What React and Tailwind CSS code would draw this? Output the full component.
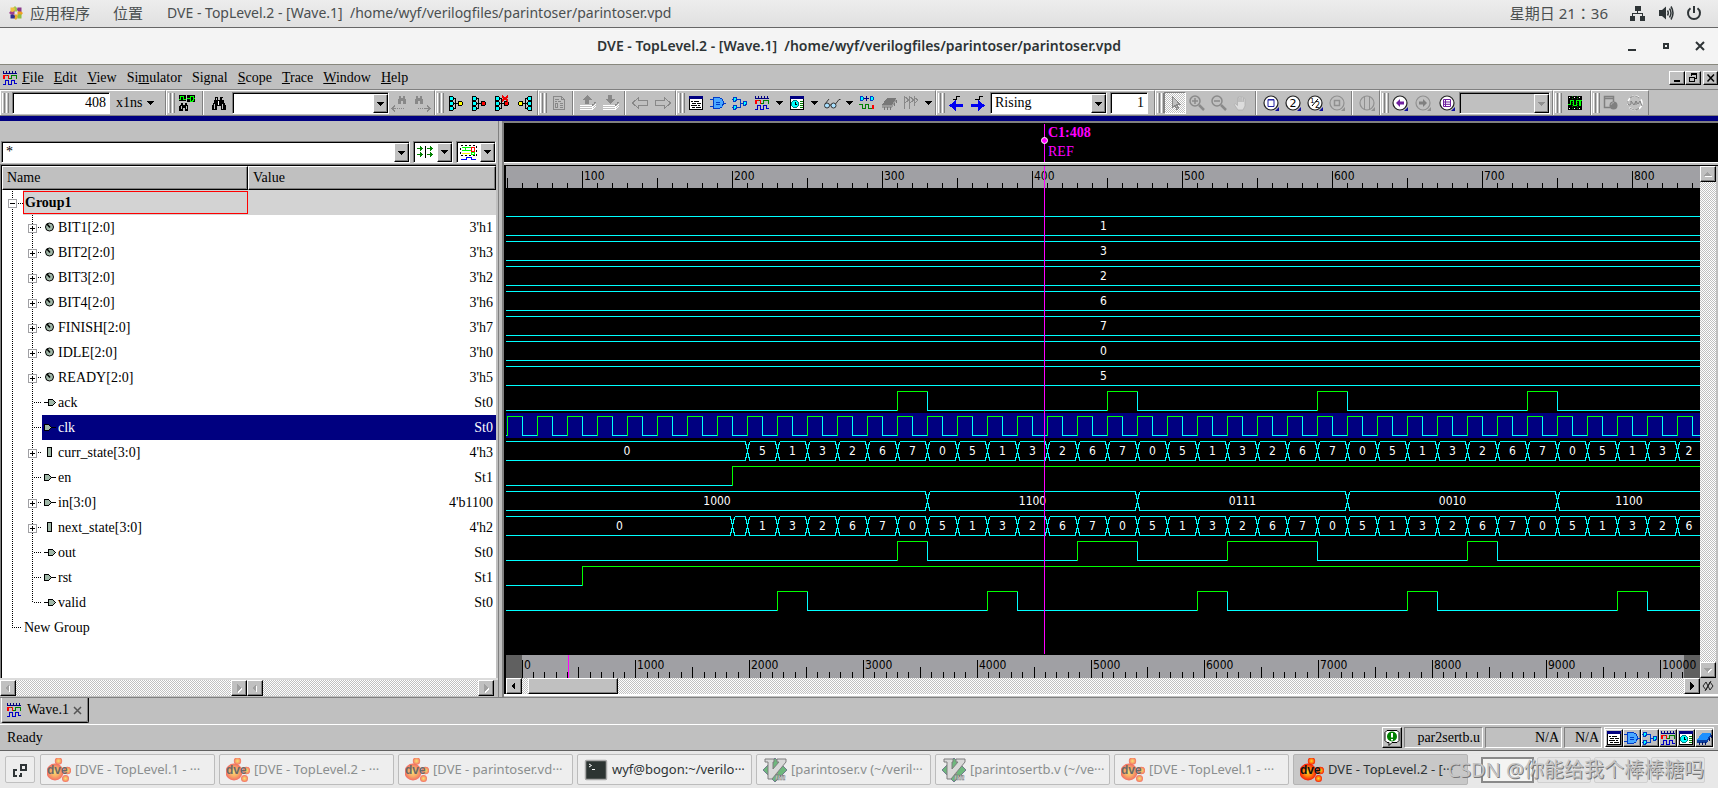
import React, { useState } from "react";
import clsx from "clsx";

const SERIF = "font-['Liberation_Serif',serif] text-sm";
const SANS = "font-['Noto_Sans','Noto_Sans_CJK_SC',sans-serif]";
const DIGITS = "font-['DejaVu_Sans_Condensed','DejaVu_Sans',sans-serif] text-xs";

const RAISED = "border border-t-white border-l-white border-r-black border-b-black bg-[#c0c0c0] shadow-[inset_-1px_-1px_0_#808080]";
const SUNKEN = "border border-t-[#808080] border-l-[#808080] border-r-white border-b-white shadow-[inset_1px_1px_0_#000]";
const DITHER = "bg-[repeating-conic-gradient(#fff_0_25%,#c0c0c0_0_50%)] bg-[length:2px_2px]";

// signals

const CYCLE = ["5", "1", "3", "2", "6", "7", "0"];

const stateChanges = (shift) => {
  const list = [];
  for (let i = 0; i < 32; i++) {
    list.push([210 + i * 20, CYCLE[(i + shift) % 7]]);
  }
  return list;
};

const pulses = (list) => [[0, 0], ...list.flatMap(([from, to]) => [[from, 1], [to, 0]])];

const clkEdges = () => {
  const list = [];
  for (let t = 50; t < 850; t += 20) list.push([t, t + 10]);
  return pulses(list);
};

const signals = [
  { name: "BIT1[2:0]", value: "3'h1", icon: "param", bus: [[0, "1"]] },
  { name: "BIT2[2:0]", value: "3'h3", icon: "param", bus: [[0, "3"]] },
  { name: "BIT3[2:0]", value: "3'h2", icon: "param", bus: [[0, "2"]] },
  { name: "BIT4[2:0]", value: "3'h6", icon: "param", bus: [[0, "6"]] },
  { name: "FINISH[2:0]", value: "3'h7", icon: "param", bus: [[0, "7"]] },
  { name: "IDLE[2:0]", value: "3'h0", icon: "param", bus: [[0, "0"]] },
  { name: "READY[2:0]", value: "3'h5", icon: "param", bus: [[0, "5"]] },
  { name: "ack", value: "St0", icon: "out", bits: pulses([[310, 330], [450, 470], [590, 610], [730, 750]]) },
  { name: "clk", value: "St0", icon: "in", bits: clkEdges() },
  { name: "curr_state[3:0]", value: "4'h3", icon: "reg", bus: [[0, "0"], ...stateChanges(0)] },
  { name: "en", value: "St1", icon: "in", bits: [[0, 0], [200, 1]] },
  { name: "in[3:0]", value: "4'b1100", icon: "in", bus: [[0, "1000"], [330, "1100"], [470, "0111"], [610, "0010"], [750, "1100"]] },
  { name: "next_state[3:0]", value: "4'h2", icon: "reg", bus: [[0, "0"], [200, ""], ...stateChanges(1)] },
  { name: "out", value: "St0", icon: "out", bits: pulses([[310, 330], [430, 470], [530, 590], [690, 710]]) },
  { name: "rst", value: "St1", icon: "in", bits: [[0, 0], [100, 1]] },
  { name: "valid", value: "St0", icon: "out", bits: pulses([[230, 250], [370, 390], [510, 530], [650, 670], [790, 810]]) },
];

// icons

function Svg({ w = 16, h = 16, children, crisp = true, className }) {
  return (
    <svg width={w} height={h} viewBox={`0 0 ${w} ${h}`} fill="none" aria-hidden="true"
      shapeRendering={crisp ? "crispEdges" : "auto"} className={clsx("shrink-0", className)}>
      {children}
    </svg>
  );
}

const Down = ({ color = "#000" }) => (
  <Svg w={7} h={4}><path d="M0 0H7V1H6V2H5V3H4V4H3V3H2V2H1V1H0Z" fill={color} /></Svg>
);

const Binoculars = ({ color = "#000" }) => (
  <Svg>
    <path d="M4 2h3v3h2V2h3v3h1v3h1v2h1v5h-5v-4H6v4H1v-5h1V8h1V5h1z" fill={color} />
    <path d="M5 3v2M11 3v2M3.500 9v5M11.500 9v5" stroke="#c0c0c0" />
    <path d="M7.500 6v4" stroke="#fff" />
  </Svg>
);

const FindSignal = () => (
  <Svg w={18} h={18}>
    <path d="M1 1h7v6H1zM9 1h8v7H9z" fill="#000" />
    <path d="M1 5.500h1.500v-3h3v3H8M9 4.500h3M12.500 2v5h2l1-1v-3l-1-1h-2M15 4.500h2" stroke="#0f0" />
    <path d="M3 9h2v2h2V9h2v2h1v6H7v-3H5v3H1v-5l2-2z" fill="#000" />
    <path d="M3.500 12v3M8.500 12v3" stroke="#c0c0c0" />
  </Svg>
);

const FindArrow = ({ back }) => (
  <Svg w={18} h={18}>
    <path d={back ? "M8 2h2v2h2V2h2v2l1 2v4h-3V7h-2v3H7V6l1-2z" : "M3 2h2v2h2V2h2v2l1 2v4H7V7H5v3H2V6l1-2z"} fill="#888" />
    {back
      ? <path d="M1 14.500h4M4 11.500l-3 3 3 3M6 14.500h1M8 14.500h1M10 14.500h1M12 14.500h1" stroke="#888" />
      : <path d="M12 14.500h5M14 11.500l3 3-3 3M5 14.500h1M7 14.500h1M9 14.500h1M11 14.500h1" stroke="#888" />}
  </Svg>
);

const Drivers = ({ color, x, flip }) => (
  <Svg>
    <g transform={flip ? "matrix(-1 0 0 1 16 0)" : undefined}>
      <path d="M1.500 1.500h3l1 1v2l-1 1h-3zM1.500 6.500h3l1 1v2l-1 1h-3zM1.500 11.500h3l1 1v2l-1 1h-3z" fill="#0ff" stroke="#000" />
      <path d="M6 3.500h1.500v10H6M6 8.500h4" stroke="#000" />
      <path d="M10.500 6.500h3l1 1v2l-1 1h-3z" fill={color} stroke="#000" />
    </g>
    {x && <path d="M8 1l6 5M14 1L8 6" stroke="#e00" strokeWidth="2" />}
  </Svg>
);

const Doc = () => (
  <Svg>
    <path d="M2.500 1.500h8l3 3v10h-11z" stroke="#888" />
    <path d="M10.500 1.500v3h3M4 4.500h4M4 6.500h2M7 6.500h3M9 8.500h3M9 10.500h3M9 12.500h3M4.500 8.500v4M6.500 8.500v4M4 8.500h3M4 12.500h3" stroke="#888" />
  </Svg>
);

const Stack = ({ down }) => (
  <Svg w={18}>
    <path d={down ? "M6 0h4v4h3L8 9 3 4h3z" : "M8 0l5 5h-3v4H6V5H3z"} fill="#888" />
    <path d="M1 10.500h12l4-3M1 12.500h12l4-3M1 14.500h12l4-3" stroke="#fff" />
    <path d="M13 10.500l4-4" stroke="#888" strokeDasharray="2 1" />
  </Svg>
);

const HollowArrow = ({ right }) => (
  <Svg>
    <path d={right ? "M.5 5.500h9v-3l6 5.500-6 5.500v-3h-9z" : "M15.500 5.500h-9v-3L.5 8l6 5.500v-3h9z"} stroke="#888" />
  </Svg>
);

const SourceIcon = () => (
  <Svg>
    <path d="M1.500 1.500h13v13h-13z" fill="#fff" stroke="#000" />
    <path d="M1 1h14v3H1z" fill="#000080" />
    <path d="M3 6.500h2M6 6.500h5M4 8.500h4M9 8.500h4M3 10.500h6M10 10.500h2M4 12.500h3M8 12.500h5" stroke="#000" />
  </Svg>
);

const GateIcon = () => (
  <Svg>
    <path d="M3.500 2.500h6l3 2 1 3-1 4-3 2h-6z" fill="#4aa8ff" stroke="#003cc8" />
    <path d="M0 4.500h3M0 11.500h3M14 8.500h2M6 7.500h4M6 9.500h4" stroke="#003cc8" />
  </Svg>
);

const PathIcon = () => (
  <Svg>
    <path d="M1.500 2v4h2l1-1V3L3.500 2zM1.500 10v4h2l1-1v-2l-1-1zM11.500 6v4h2l1-1V7l-1-1z" fill="#0ff" stroke="#003cc8" />
    <path d="M5 4.500h3.500v8H5M9 8.500h2M0 4.500h1M0 12.500h1" stroke="#003cc8" />
  </Svg>
);

const WaveIcon = () => (
  <Svg>
    <path d="M1 3h14M1.500 1v2M4.500 1v2M7.500 1v2M10.500 1v2M13.500 1v2" stroke="#000080" />
    <path d="M2 5v4" stroke="#f00" strokeWidth="2" />
    <path d="M3 5.500h3.500v3H9v-3h5.500v3" stroke="#008000" />
    <path d="M6.500 5v4M1 5.500h4" stroke="#f00" />
    <path d="M1 14.500h2.500v-4h3v4h3v-4h3v3H15" stroke="#0000c8" />
  </Svg>
);

const ListIcon = () => (
  <Svg>
    <path d="M1.500 1.500h13v13h-13z" fill="#fff" stroke="#000" />
    <path d="M1 1h14v3H1z" fill="#000080" />
    <circle cx="6" cy="9" r="3.500" fill="#0ff" stroke="#008080" />
    <path d="M6.500 7v2.500H8" stroke="#000" />
    <path d="M11 6.500h3M11 8.500h3M11 10.500h3M11 12.500h3" stroke="#008000" />
  </Svg>
);

const Glasses = () => (
  <Svg w={18} crisp={false}>
    <circle cx="4" cy="10.500" r="2.500" fill="#a8e0ff" stroke="#333" />
    <circle cx="10.500" cy="10.500" r="2.500" fill="#a8e0ff" stroke="#333" />
    <path d="M6.500 10h1.500M2 9l4-5M12.500 9L16 4.500h1.500" stroke="#333" />
  </Svg>
);

const IoIcon = () => (
  <Svg>
    <path d="M1.500 1.500h2l1 1v2l-1 1h-2zM11.500 1.500h2l1 1v2l-1 1h-2z" fill="#0ff" stroke="#003cc8" />
    <path d="M5 3.500h5M7.500 1v5" stroke="#000080" />
    <path d="M0 9.500h3.500v4h3v-4h3v4h3" stroke="#008000" />
    <path d="M13 9.500h2v4h-2z" fill="#f00" />
  </Svg>
);

const Chip = ({ on }) => (
  <Svg>
    <path d="M6 3h9l-4 7H1z" fill={on ? "#1e90ff" : "#777"} />
    <path d="M1 10h10v3H1zM11 10l4-7v3l-4 7z" fill={on ? "#0a3fa0" : "#999"} />
    <path d="M3.500 12v3M6.500 12v3M9.500 12v3M13.500 8v3M15.500 5v3" stroke={on ? "#001060" : "#777"} />
  </Svg>
);

const Flags = () => (
  <Svg>
    <path d="M1.500 1v13M6.500 1v13M11.500 1v10M2 2l4 3-4 3M7 2l4 3-4 3M12 3l3 2-3 3" stroke="#888" />
  </Svg>
);

const EdgeStep = ({ right }) => (
  <Svg>
    {right
      ? <path d="M1 9h7V5l7 5.500L8 16v-4H1z" fill="#0000f0" />
      : <path d="M15 9H8V5l-7 5.500L8 16v-4h7z" fill="#0000f0" />}
    <path d={right ? "M5 4.500h4.500v-3H13" : "M5 4.500h3.500v-3H12"} stroke="#000" />
  </Svg>
);

const Pointer = () => (
  <Svg>
    <path d="M5.500 1.500v11l2.500-2 2 4 1.500-1-2-4h3.500z" fill="#c0c0c0" stroke="#888" />
  </Svg>
);

const Lens = ({ minus }) => (
  <Svg crisp={false}>
    <circle cx="6" cy="6" r="5" stroke="#8a8a8a" strokeWidth="1.500" />
    <path d={minus ? "M3 6h6" : "M3 6h6M6 3v6"} stroke="#8a8a8a" strokeWidth="1.500" />
    <path d="M10 10l5 5" stroke="#8a8a8a" strokeWidth="2.500" />
  </Svg>
);

const Hand = () => (
  <Svg crisp={false}>
    <path d="M5 15L1.500 10c-.5-1 .5-1.500 1.500-1l1.500 1.500V3c0-1 1.500-1 1.500 0v4-5c0-1 2-1 2 0v5-4.500c0-1 2-1 2 0V7l.5-3c.2-1 1.500-1 1.500 0v7l-2 4z" fill="#dcdcdc" stroke="#aaa" strokeWidth=".7" />
  </Svg>
);

function ZoomGlyph({ children, off }) {
  return (
    <Svg crisp={false}>
      <circle cx="8" cy="8" r="7" fill={off ? "none" : "#fff"} stroke={off ? "#909090" : "#222"} strokeWidth="1.200" />
      {children}
      <path d="M12 16h4v-4z" fill={off ? "#909090" : "#1010a0"} />
    </Svg>
  );
}

const WaveCompare = () => (
  <Svg>
    <path d="M1 1h14v14H1z" fill="#000" />
    <path d="M2 2.500h13M2 13.500h13" stroke="#fff" strokeDasharray="1 4" />
    <path d="M5.500 1v14M10.500 1v14" stroke="#008000" strokeDasharray="1 1" />
    <path d="M1 9.500h2v-4h3v5h3v-5h3v5h1v-5h2" stroke="#0f0" />
  </Svg>
);

const WindowGear = () => (
  <Svg crisp={false}>
    <path d="M7 12.500H1.500v-11h9V7M1 3.500h10" stroke="#808080" strokeWidth="1.500" />
    <circle cx="10.500" cy="10.500" r="4" fill="#808080" />
    <path d="M8 10a3 3 0 0 1 3-2.500" stroke="#aaa" />
  </Svg>
);

const Uvm = () => (
  <Svg w={18} crisp={false}>
    <circle cx="9" cy="8" r="7" stroke="#fff" strokeWidth="1.500" strokeDasharray="7 3" />
    <path d="M2 6v3q1 2 3 0V6l3 4 2-4v4M10 6l2 3 2-3 2 5" stroke="#808080" />
    <path d="M4 3q5-4 9 0M4 13q5 4 9 0" stroke="#909090" />
  </Svg>
);

const RadixIcon = () => (
  <Svg>
    <path d="M0 4.500h6M3 2.500l2 2-2 2M0 10.500h6M3 8.500l2 2-2 2M10 4.500h6M13 2.500l2 2-2 2M10 10.500h6M13 8.500l2 2-2 2" stroke="#008000" />
    <path d="M8.500 2v12" stroke="#000" />
  </Svg>
);

const FilterIcon = () => (
  <Svg w={17} h={17}>
    <path d="M.5 1.500h16v10H.5z" stroke="#000" strokeDasharray="2 2" />
    <path d="M2 3.500h9M2 6.500h9M5.500 3v4" stroke="#0f0" />
    <path d="M11.500 3.500h3v4h-3z" stroke="#f00" />
    <path d="M2 9.500h8" stroke="#ff0" />
    <path d="M11.500 8.500h3v2h-3z" stroke="#0f0" />
    <path d="M1 15.500h5v-2h5v2h5" stroke="#00f" />
  </Svg>
);

const Activities = () => (
  <Svg crisp={false}>
    <path d="M7 1l2 2v3.500H5V3z" fill="#a0c850" />
    <path d="M9.500 2.500h4V7L11 7.500 9 5z" fill="#8a3a8a" />
    <path d="M15 8l-2 2.500H9.500v-4H13z" fill="#f0a020" />
    <path d="M13.500 13.500h-4L9 11l2-2 2.500.5z" fill="#90c040" />
    <path d="M8 15l-2.500-2V9.500h4V13z" fill="#e8b030" />
    <path d="M2.500 13.500v-4L5 9l2 2-.5 2.500z" fill="#303090" />
    <path d="M1 8l2-2.500h3.500v4H3z" fill="#a04090" />
    <path d="M2.500 2.500h4L7 5 5 7l-2.500-.5z" fill="#f0c040" />
  </Svg>
);

const NetworkIcon = () => (
  <Svg>
    <path d="M5 1h6v5H5zM0 11h5v5H0zM10 11h5v5h-5z" fill="#2e3436" />
    <path d="M7.500 6v3M2.500 11V8.500h10V11" stroke="#2e3436" />
  </Svg>
);

const VolumeIcon = () => (
  <Svg crisp={false}>
    <path d="M1 5h3l4-3.500v13L4 11H1z" fill="#2e3436" />
    <path d="M9.500 5.500q1.500 2.500 0 5M11.500 3.500q3 4.500 0 9M13 1.500q4 6.500 0 13" stroke="#2e3436" strokeWidth="1.500" />
  </Svg>
);

const PowerIcon = () => (
  <Svg crisp={false}>
    <path d="M4.500 3.200a6 6 0 1 0 7 0M8 1v7" stroke="#2e3436" strokeWidth="2" />
  </Svg>
);

const DveLogo = ({ dim }) => (
  <svg width="24" height="24" viewBox="0 0 24 24" aria-hidden="true" className={clsx("shrink-0", dim && "opacity-60")}>
    <defs>
      <radialGradient id={dim ? "ballDim" : "ball"} cx="50%" cy="50%">
        <stop offset="0" stopColor="#ffd820" />
        <stop offset=".55" stopColor="#ff7a10" />
        <stop offset="1" stopColor="#f41a08" />
      </radialGradient>
    </defs>
    <circle cx="8" cy="14" r="8.500" fill={dim ? "url(#ballDim)" : "url(#ball)"} />
    <circle cx="11.500" cy="3" r="3.700" fill={dim ? "url(#ballDim)" : "url(#ball)"} />
    <circle cx="20.500" cy="12.500" r="3.700" fill={dim ? "url(#ballDim)" : "url(#ball)"} />
    <circle cx="18.500" cy="20.500" r="3.500" fill={dim ? "url(#ballDim)" : "url(#ball)"} />
    <text x="0" y="16" fontSize="12" fontWeight="700" fill="#101010" fontFamily="Liberation Sans, sans-serif">dve</text>
  </svg>
);

const TerminalLogo = () => (
  <Svg w={24} h={24} crisp={false}>
    <rect x="1.500" y="2.500" width="21" height="19" rx="1" fill="#2c3432" stroke="#a8a8a8" strokeWidth="1.500" />
    <path d="M5 6l2.500 1.500L5 9M8 11.500h3" stroke="#fff" />
  </Svg>
);

const VimLogo = () => (
  <svg width="24" height="24" viewBox="0 0 24 24" aria-hidden="true" className="shrink-0 opacity-60">
    <path d="M12 0l12 12-12 12L0 12z" fill="#199533" stroke="#203050" />
    <path d="M2 1h9v3h-1v7l6-7h-2V1h9v3L9 21H5V4H2z" fill="#ccc" stroke="#333" />
    <text x="12" y="22" fontSize="10" fontStyle="italic" fontWeight="700" fill="#ddd" stroke="#222" strokeWidth=".5" fontFamily="Liberation Serif, serif">im</text>
  </svg>
);

// toolbar pieces

const Handle = () => (
  <span className="flex h-[20px] w-[7px] shrink-0 gap-px">
    <span className="w-[3px] border-l border-r border-l-white border-r-[#808080]" />
    <span className="w-[3px] border-l border-r border-l-white border-r-[#808080]" />
  </span>
);

const Group = ({ className, children }) => (
  <div className={clsx("flex h-[26px] shrink-0 items-center border border-t-white border-l-white border-r-[#808080] border-b-[#808080] pl-px", className)}>
    <Handle />
    {children}
  </div>
);

const Sep = ({ className }) => (
  <span className={clsx("flex h-[24px] shrink-0 justify-center", className)}>
    <span className="w-[2px] border-l border-r border-l-[#808080] border-r-white" />
  </span>
);

const Tool = ({ label, className = "w-[22px]", children }) => (
  <button aria-label={label} className={clsx("flex h-[22px] shrink-0 items-center justify-center", className)}>
    {children}
  </button>
);

const Drop = ({ label }) => <Tool label={label} className="w-[13px]"><Down /></Tool>;

function Combo({ label, value = "", className, disabled }) {
  return (
    <div className={clsx("relative h-[22px]", SUNKEN, disabled ? "bg-[#c0c0c0]" : "bg-white", className)}>
      <select aria-label={label} disabled={disabled} className="h-full w-full appearance-none bg-transparent pl-1 leading-5 opacity-100 outline-none">
        <option>{value}</option>
      </select>
      <span className={clsx("pointer-events-none absolute top-[1px] right-0 bottom-0 flex w-[15px] items-center justify-center", RAISED)}>
        <Down color={disabled ? "#909090" : "#000"} />
      </span>
    </div>
  );
}

const IconCombo = ({ label, children }) => (
  <button aria-label={label} className={clsx("flex h-[22px] w-10 shrink-0 items-center bg-white pl-[3px]", SUNKEN)}>
    {children}
    <span className={clsx("ml-auto flex h-[19px] w-[15px] items-center justify-center", RAISED)}><Down /></span>
  </button>
);

const ScrollButton = ({ label, dir, off }) => {
  const paths = { left: "M8 3v8L4 7z", right: "M5 3v8l4-4z", up: "M2 9h9L6.500 5z", down: "M2 5h9L6.500 9z" };
  return (
    <button aria-label={label} className={clsx("flex size-4 shrink-0 items-center justify-center", RAISED)}>
      <Svg w={14} h={14}>
        {off && <path d={paths[dir]} fill="#fff" transform="translate(1 1)" />}
        <path d={paths[dir]} fill={off ? "#a0a0a0" : "#000"} />
      </Svg>
    </button>
  );
};

function TopBar() {
  return (
    <header className={clsx("flex h-7 shrink-0 items-center border-b border-[#666] bg-linear-to-b from-[#ededed] to-[#e0e0e0] pr-4 pb-px pl-2 text-[15px] text-[#4a4f50]", SANS)}>
      <Activities />
      <button className="ml-[6px]">应用程序</button>
      <button className="ml-[23px]">位置</button>
      <button className="ml-6 text-sm">DVE - TopLevel.2 - [Wave.1]&nbsp; /home/wyf/verilogfiles/parintoser/parintoser.vpd</button>
      <span className="ml-auto font-['Noto_Sans','Noto_Sans_CJK_TC',sans-serif]">星期日 21：36</span>
      <button aria-label="网络" className="ml-[22px]"><NetworkIcon /></button>
      <button aria-label="音量" className="ml-3"><VolumeIcon /></button>
      <button aria-label="电源" className="ml-3"><PowerIcon /></button>
    </header>
  );
}

function TitleBar() {
  return (
    <div className={clsx("relative flex h-[37px] shrink-0 items-center justify-center border-b border-b-[#88887e] bg-[#f4f4f4]", SANS)}>
      <h1 className="text-sm font-semibold text-[#2e3436]">DVE - TopLevel.2 - [Wave.1]&nbsp; /home/wyf/verilogfiles/parintoser/parintoser.vpd</h1>
      <div className="absolute right-3 flex gap-[22px]">
        <button aria-label="最小化"><Svg w={12} h={12}><path d="M2 9h8v2H2z" fill="#2e3436" /></Svg></button>
        <button aria-label="最大化"><Svg w={12} h={12}><path d="M4 4h4v4H4z" stroke="#2e3436" strokeWidth="2" /></Svg></button>
        <button aria-label="关闭"><Svg w={12} h={12} crisp={false}><path d="M2 2l8 8M10 2l-8 8" stroke="#2e3436" strokeWidth="2" /></Svg></button>
      </div>
    </div>
  );
}

const menus = [
  ["", "F", "ile"], ["", "E", "dit"], ["", "V", "iew"], ["Si", "m", "ulator"], ["Si", "g", "nal"],
  ["", "S", "cope"], ["", "T", "race"], ["", "W", "indow"], ["", "H", "elp"],
];

function MenuBar() {
  return (
    <nav className="flex h-[25px] shrink-0 items-center border-b border-[#808080] pt-[2px] pl-[2px]">
      <WaveIcon />
      <div className="ml-1 flex gap-[10px]">
        {menus.map(([a, b, c]) => (
          <button key={a + b + c}>{a}<u>{b}</u>{c}</button>
        ))}
      </div>
      <div className="ml-auto flex">
        <button aria-label="Minimize" className={clsx("flex h-[14px] w-4 items-center justify-center", RAISED)}>
          <Svg w={12} h={12}><path d="M3 8h6v2H3z" fill="#000" /></Svg>
        </button>
        <button aria-label="Restore" className={clsx("flex h-[14px] w-4 items-center justify-center", RAISED)}>
          <Svg w={12} h={12}><path d="M4.500 4V2.500h5v4H8M4 1.500h6M2.500 5.500h5v4h-5zM2 5h6" stroke="#000" /></Svg>
        </button>
        <button aria-label="Close" className={clsx("ml-[2px] flex h-[14px] w-[15px] items-center justify-center", RAISED)}>
          <Svg w={12} h={12} crisp={false}><path d="M2.500 2.500l6.500 7M9 2.500l-6.500 7" stroke="#000" strokeWidth="1.500" /></Svg>
        </button>
      </div>
    </nav>
  );
}

function Toolbar() {
  const [time, setTime] = useState("408");
  const [count, setCount] = useState("1");
  return (
    <div className="flex h-[26px] shrink-0 overflow-hidden border-b border-[#808080]">
      <Group className="w-[166px]">
        <input aria-label="Time" value={time} onChange={(e) => setTime(e.target.value)}
          className={clsx("ml-[3px] h-[22px] w-[98px] bg-white pr-[3px] text-right outline-none", SUNKEN)} />
        <button className="ml-[6px] flex items-center gap-[5px]">x1ns <Down /></button>
      </Group>
      <Group className="w-[269px]">
        <Tool label="Find signal" className="w-[24px]"><FindSignal /></Tool>
        <Sep className="w-[7px]" />
        <Tool label="Find" className="w-[26px]"><Binoculars /></Tool>
        <Combo label="Search text" className="w-[157px]" />
        <Tool label="Find previous"><FindArrow back /></Tool>
        <Tool label="Find next"><FindArrow /></Tool>
      </Group>
      <Group className="w-[103px]">
        <Tool label="Trace drivers" className="w-[23px]"><Drivers color="#ff0" /></Tool>
        <Tool label="Trace X" className="w-[23px]"><Drivers color="#f00" /></Tool>
        <Tool label="Clear trace" className="w-[23px]"><Drivers color="#f00" x /></Tool>
        <Tool label="Trace loads" className="w-[23px]"><Drivers color="#ff0" flip /></Tool>
      </Group>
      <Group className="w-[138px]">
        <Tool label="Edit source" className="w-[23px]"><Doc /></Tool>
        <Sep className="w-[6px]" />
        <Tool label="Scope up" className="w-[23px]"><Stack /></Tool>
        <Tool label="Scope down" className="w-[23px]"><Stack down /></Tool>
        <Sep className="w-[6px]" />
        <Tool label="Back" className="w-[23px]"><HollowArrow /></Tool>
        <Tool label="Forward" className="w-[23px]"><HollowArrow right /></Tool>
      </Group>
      <Group className="w-[260px]">
        <Tool label="Source"><SourceIcon /></Tool>
        <Tool label="Schematic"><GateIcon /></Tool>
        <Tool label="Path schematic"><PathIcon /></Tool>
        <Tool label="Wave"><WaveIcon /></Tool>
        <Drop label="Wave windows" />
        <Tool label="List"><ListIcon /></Tool>
        <Drop label="List windows" />
        <Tool label="Watch"><Glasses /></Tool>
        <Drop label="Watch windows" />
        <Tool label="Signals"><IoIcon /></Tool>
        <Tool label="Memory"><Chip /></Tool>
        <Tool label="Assertions"><Flags /></Tool>
        <Drop label="Assertion windows" />
      </Group>
      <Group className="w-[219px]">
        <Tool label="Previous edge"><EdgeStep /></Tool>
        <Tool label="Next edge"><EdgeStep right /></Tool>
        <Combo label="Edge" value="Rising" className="ml-px w-[117px]" />
        <input aria-label="Edge count" value={count} onChange={(e) => setCount(e.target.value)}
          className={clsx("ml-[3px] h-[22px] w-[38px] bg-white pr-[3px] text-right outline-none", SUNKEN)} />
      </Group>
      <Group className="w-[225px]">
        <Tool label="Select" className={clsx("w-[22px] border border-t-[#808080] border-l-[#808080] border-r-white border-b-white", DITHER)}><Pointer /></Tool>
        <Tool label="Zoom in"><Lens /></Tool>
        <Tool label="Zoom out"><Lens minus /></Tool>
        <Tool label="Pan"><Hand /></Tool>
        <Sep className="w-2" />
        <Tool label="Zoom full"><ZoomGlyph><path d="M5 4.500h6v7H5zM5 5h6" stroke="#2020a0" /></ZoomGlyph></Tool>
        <Tool label="Zoom in 2x"><ZoomGlyph><text x="8" y="12" fontSize="11" textAnchor="middle" fill="#000" fontFamily="DejaVu Sans, sans-serif">2</text></ZoomGlyph></Tool>
        <Tool label="Zoom out 2x"><ZoomGlyph>
          <text x="3" y="8" fontSize="7" fill="#000" fontFamily="DejaVu Sans, sans-serif">1</text>
          <text x="8" y="13" fontSize="8" fill="#000" fontFamily="DejaVu Sans, sans-serif">2</text>
          <path d="M5 11l6-7" stroke="#000" />
        </ZoomGlyph></Tool>
        <Tool label="Zoom to selection"><ZoomGlyph off><path d="M5.500 5.500h5v5h-5z" stroke="#909090" strokeWidth="1.500" /></ZoomGlyph></Tool>
        <Sep className="w-2" />
        <Tool label="Zoom to cursors"><ZoomGlyph off><path d="M5.500 1v14M10.500 1v14" stroke="#909090" /></ZoomGlyph></Tool>
      </Group>
      <Group className="w-[173px]">
        <Tool label="Zoom back"><ZoomGlyph><path d="M4 8l4-4v2.500h4v3H8V12z" fill="#7020a0" /></ZoomGlyph></Tool>
        <Tool label="Zoom forward" className="w-[24px]"><ZoomGlyph off><path d="M12 8L8 4v2.500H4v3h4V12z" fill="#808080" /></ZoomGlyph></Tool>
        <Tool label="Named zooms" className="w-[23px]"><ZoomGlyph><path d="M4.500 4.500h7v7h-7zM4.500 7h7M4.500 9.300h7M6.500 4.500v7" stroke="#7020a0" /></ZoomGlyph></Tool>
        <Combo label="Marker" disabled className="ml-px w-[91px]" />
      </Group>
      <Group className="w-[38px]">
        <Tool label="Compare waves" className="w-[26px]"><WaveCompare /></Tool>
      </Group>
      <Group className="w-[58px]">
        <Tool label="Transactions"><WindowGear /></Tool>
        <Tool label="UVM" className="w-[25px]"><Uvm /></Tool>
      </Group>
    </div>
  );
}

// signal tree

const kinds = {
  param: (
    <Svg w={12} h={25} crisp={false}>
      <circle cx="5.500" cy="12" r="4" fill="#a0b8a8" stroke="#000" />
      <path d="M3 9l3 3.500" stroke="#000" strokeWidth="1.500" />
    </Svg>
  ),
  out: (
    <Svg w={12} h={25}>
      <path d="M0 12.500h4" stroke="#000" />
      <path d="M4.500 9.500h4l3 3-3 3h-4z" fill="#a0b8a8" stroke="#000" />
    </Svg>
  ),
  in: (
    <Svg w={12} h={25}>
      <path d="M7 12.500h5" stroke="#000" />
      <path d="M.5 9.500h4l3 3-3 3h-4z" fill="#a0b8a8" stroke="#000" />
    </Svg>
  ),
  reg: (
    <Svg w={12} h={25}>
      <path d="M3.500 7.500h4v9h-4z" fill="#a0b8a8" stroke="#000" />
    </Svg>
  ),
};

function Branch({ row, last, expandable }) {
  return (
    <Svg w={40} h={25}>
      <path d="M10.500 0v25" stroke="#000" strokeDasharray="1 1" strokeDashoffset={row % 2} />
      <path d={last ? "M30.500 0v13" : "M30.500 0v25"} stroke="#000" strokeDasharray="1 1" strokeDashoffset={row % 2} />
      <path d="M32 12.500h8" stroke="#000" strokeDasharray="1 1" />
      {expandable && (
        <>
          <path d="M26.500 9.500h8v8h-8z" fill="#fff" stroke="#a0a0a4" />
          <path d="M28 13.500h5M30.500 11v5" stroke="#000" />
        </>
      )}
    </Svg>
  );
}

function SignalPanel({ selected, onSelect }) {
  const [filter, setFilter] = useState("*");
  return (
    <section className="flex w-[499px] shrink-0 flex-col border-r border-[#808080] pt-5 pb-px">
      <div className="flex h-[22px] shrink-0 gap-[3px] pr-[2px] pl-px">
        <div className={clsx("relative h-[22px] flex-1 bg-white", SUNKEN)}>
          <input aria-label="Filter" value={filter} onChange={(e) => setFilter(e.target.value)} className="h-full w-full bg-transparent pl-[4px] outline-none" />
          <button aria-label="Filter history" className={clsx("absolute top-[1px] right-0 bottom-0 flex w-[15px] items-center justify-center", RAISED)}><Down /></button>
        </div>
        <IconCombo label="Signal types"><RadixIcon /></IconCombo>
        <IconCombo label="Filter options"><FilterIcon /></IconCombo>
      </div>
      <div className="mt-px mr-[2px] min-h-0 flex-1 overflow-hidden border-t border-l border-[#808080] bg-white">
        <div className="h-full border-t border-l border-black">
          <table className="w-full table-fixed border-collapse">
            <thead>
              <tr>
                <th className="w-[246px] p-0 text-left font-normal">
                  <div className="h-6 border border-t-white border-l-white border-r-black border-b-black bg-[#c0c0c0] pl-1 leading-[22px] shadow-[inset_-1px_-1px_0_#808080]">Name</div>
                </th>
                <th className="p-0 text-left font-normal">
                  <div className="h-6 border border-t-white border-l-white border-r-black border-b-black bg-[#c0c0c0] pl-1 leading-[22px] shadow-[inset_-1px_-1px_0_#808080]">Value</div>
                </th>
              </tr>
            </thead>
            <tbody>
              <tr>
                <td className="p-0">
                  <div className="flex h-[25px]">
                    <Svg w={21} h={25}>
                      <path d="M10.500 1v24" stroke="#000" strokeDasharray="1 1" />
                      <path d="M16 13.500h5" stroke="#000" strokeDasharray="1 1" />
                      <path d="M6.500 9.500h8v8h-8z" fill="#fff" stroke="#a0a0a4" />
                      <path d="M8 13.500h5" stroke="#000" />
                    </Svg>
                    <div className="flex-1 bg-[#d3d3d3]">
                      <div className="mt-px h-[23px] border border-[#f00] pl-px leading-[21px] font-bold">Group1</div>
                    </div>
                  </div>
                </td>
                <td className="bg-[#d3d3d3] p-0" />
              </tr>
              {signals.map((s, i) => {
                const active = selected === s.name;
                return (
                  <tr key={s.name} onClick={() => onSelect(s.name)} className="leading-[25px]">
                    <td className="p-0">
                      <div className="flex h-[25px]">
                        <Branch row={i} last={i === signals.length - 1} expandable={!!s.bus} />
                        <div className={clsx("flex flex-1 gap-[2px] pl-[2px]", active && "bg-[#000080] text-white")}>
                          {kinds[s.icon]}
                          {s.name}
                        </div>
                      </div>
                    </td>
                    <td className={clsx("p-0 pr-[3px] text-right", active && "bg-[#000080] text-white")}>{s.value}</td>
                  </tr>
                );
              })}
              <tr>
                <td className="p-0">
                  <div className="flex h-[25px] leading-[25px]">
                    <Svg w={21} h={25}><path d="M10.500 0v13M12 12.500h8" stroke="#000" strokeDasharray="1 1" /></Svg>
                    <span className="pl-px">New Group</span>
                  </div>
                </td>
                <td className="p-0" />
              </tr>
            </tbody>
          </table>
        </div>
      </div>
      <div className="flex h-[18px] shrink-0 border-t-2 border-[#dcdcdc] pr-1">
        <div className={clsx("flex flex-1 justify-between", DITHER)}>
          <ScrollButton label="Scroll names left" dir="left" off />
          <ScrollButton label="Scroll names right" dir="right" off />
        </div>
        <div className={clsx("flex flex-1 justify-between", DITHER)}>
          <ScrollButton label="Scroll values left" dir="left" off />
          <ScrollButton label="Scroll values right" dir="right" off />
        </div>
      </div>
    </section>
  );
}

// waveforms, 10ns = 15px, left edge just before 50ns

const VIEW_W = 1194;
const ROW_H = 25;
const CURSOR = 408;
const toX = (t) => Math.max(0, (t - 50) * 1.5 + 1);

function BitWave({ edges, y }) {
  let high = "";
  let low = "";
  edges.forEach(([t, v], i) => {
    const x = toX(t) + 0.5;
    const end = i + 1 < edges.length ? toX(edges[i + 1][0]) + 0.5 : VIEW_W;
    const level = v ? y + 3.5 : y + 22.5;
    const from = v ? y + 23 : y + 3;
    const seg = i === 0 ? `M0 ${level}H${end}` : `M${x} ${from}V${level}H${end}`;
    if (v) high += seg;
    else low += seg;
  });
  return (
    <>
      <path d={low} stroke="#0ff" />
      <path d={high} stroke="#0f0" />
    </>
  );
}

function BusWave({ changes, y }) {
  const top = y + 3.5;
  const bottom = y + 22.5;
  return changes.map(([t, label], i) => {
    const first = i === 0;
    const last = i === changes.length - 1;
    const x = first ? 0 : toX(t);
    const end = last ? VIEW_W : toX(changes[i + 1][0]);
    const l = first ? 0 : x + 2.5;
    const r = last ? VIEW_W : end - 1.5;
    return (
      <g key={t}>
        <path d={`M${l} ${top}H${r}M${l} ${bottom}H${r}`} stroke="#0ff" />
        {!first && <path d={`M${l} ${top}v3h-1v4h-1v5h1v4h1v3`} stroke="#0ff" />}
        {!last && <path d={`M${r} ${top}v3h1v4h1v5h-1v4h-1v3`} stroke="#0ff" />}
        <text x={(x + end) / 2 + 0.5} y={y + 17} textAnchor="middle" fill="#fff">{label}</text>
      </g>
    );
  });
}

function Ruler({ start, end, step, toPx }) {
  const ticks = [];
  for (let t = start, n = start / step; t <= end; t += step, n++) {
    const len = n % 10 === 0 ? 17 : n % 5 === 0 ? 10 : 5;
    ticks.push({ t, x: Math.floor(toPx(t)), len });
  }
  return ticks.map(({ t, x, len }) => (
    <g key={t}>
      <path d={`M${x + 0.5} 23V${22 - len}`} stroke="#000" shapeRendering="crispEdges" />
      {len === 17 && <text x={x + 2} y="14" fill="#000">{t}</text>}
    </g>
  ));
}

function WavePanel({ selected }) {
  const cx = toX(CURSOR);
  const overviewX = (t) => 16 + t * 0.1138;
  const active = signals.findIndex((s) => s.name === selected);
  return (
    <section className="ml-[3px] flex min-w-0 flex-1 flex-col border-l-2 border-[#808080]">
      <div className="h-[42px] shrink-0 border-t-2 border-b border-t-[#808080] border-b-white bg-black pl-[2px]">
        <svg width="100%" height="39" className={SERIF} aria-label="Cursors">
          <path d={`M${cx + 0.5} 1V39`} stroke="#f0f" shapeRendering="crispEdges" />
          <circle cx={cx + 0.5} cy="17.500" r="3" fill="#f0f" stroke="#fff" />
          <text x={cx + 4} y="14" fill="#f0f" fontWeight="700">C1:408</text>
          <text x={cx + 4} y="33" fill="#f0f">REF</text>
        </svg>
      </div>
      <div className="mt-[2px] flex min-h-0 flex-1 border-t border-l-2 border-black pr-[2px]">
        <div className="flex min-w-0 flex-1 flex-col bg-black">
          <svg width="100%" height="22" className={clsx("shrink-0 bg-[#a0a0a4]", DIGITS)} aria-label="Time ruler">
            <Ruler start={50} end={840} step={10} toPx={toX} />
            <path d={`M${cx + 0.5} 0V22`} stroke="#f0f" shapeRendering="crispEdges" />
          </svg>
          <div className="min-h-0 flex-1 overflow-hidden pb-px">
            <svg width="100%" height="100%" fill="none" shapeRendering="crispEdges" className={DIGITS} aria-label="Waveforms">
              {active >= 0 && <rect y={25 + active * ROW_H} width="100%" height={ROW_H} fill="#000080" />}
              {signals.map((s, i) => s.bus
                ? <BusWave key={s.name} changes={s.bus} y={25 + i * ROW_H} />
                : <BitWave key={s.name} edges={s.bits} y={25 + i * ROW_H} />)}
              <path d={`M${cx + 0.5} 0V1000`} stroke="#f0f" />
            </svg>
          </div>
          <div className="h-[23px] shrink-0 border-x-[16px] border-[#606060] bg-[#a0a0a4]">
            <svg width="100%" height="23" className={clsx("overflow-visible", DIGITS)} aria-label="Overview ruler">
              <Ruler start={0} end={10200} step={100} toPx={(t) => overviewX(t) - 16} />
              <path d={`M${Math.round(overviewX(CURSOR)) - 15.5} 0V23`} stroke="#f0f" shapeRendering="crispEdges" />
            </svg>
          </div>
          <div className={clsx("flex h-4 shrink-0", DITHER)}>
            <ScrollButton label="Scroll waves left" dir="left" />
            <span className={clsx("ml-[6px] w-[90px]", RAISED)} />
            <span className="flex-1" />
            <ScrollButton label="Scroll waves right" dir="right" />
          </div>
        </div>
        <div className="flex w-4 shrink-0 flex-col">
          <div className={clsx("flex flex-1 flex-col justify-between", DITHER)}>
            <ScrollButton label="Scroll up" dir="up" off />
            <ScrollButton label="Scroll down" dir="down" off />
          </div>
          <button aria-label="Sync views" className="flex size-4 items-center justify-center bg-[#c0c0c0]">
            <Svg w={14} h={14} crisp={false}>
              <path d="M5 3L2 7l3 4 2-4zM9 3l3 4-3 4-2-4zM4 12l6-10" stroke="#222" />
            </Svg>
          </button>
        </div>
      </div>
      <div className="h-[3px] shrink-0 border-b border-[#c0c0c0] bg-white" />
    </section>
  );
}

function StatusBar() {
  const box = "flex h-[21px] items-center justify-end border border-t-[#808080] border-l-[#808080] border-r-white border-b-white pr-[2px]";
  const views = [<SourceIcon />, <GateIcon />, <PathIcon />, <WaveIcon />, <ListIcon />, <Chip on />];
  const names = ["Source", "Schematic", "Path", "Wave", "List", "Memory"];
  return (
    <footer className="flex h-[27px] shrink-0 items-center gap-[2px] border-t border-b border-t-white border-b-[#606060] pr-1 pl-[7px]">
      <span>Ready</span>
      <button aria-label="Messages" className={clsx("ml-auto flex h-[21px] w-5 items-center justify-center", RAISED)}>
        <Svg w={16} h={18} crisp={false}>
          <path d="M3 1.500h10l2 2v8l-2 2H8l-3 3v-3H3l-2-2v-8z" fill="#fff" stroke="#000" />
          <circle cx="8" cy="7.500" r="5" fill="#008000" />
          <path d="M8 4v4.500M8 10v1.500" stroke="#fff" strokeWidth="2" />
        </Svg>
      </button>
      <span className={clsx("w-[79px]", box)}>par2sertb.u</span>
      <span className={clsx("w-[77px]", box)}>N/A</span>
      <span className={clsx("w-[38px]", box)}>N/A</span>
      <div className="flex h-[21px] items-center border border-t-white border-l-white border-r-white border-b-white">
        {views.map((v, i) => (
          <button key={names[i]} aria-label={names[i]} className={clsx("flex h-[18px] w-[18px] items-center justify-center", RAISED)}>{v}</button>
        ))}
      </div>
    </footer>
  );
}

const tasks = [
  { title: "[DVE - TopLevel.1 - ···", logo: "dve", dim: true },
  { title: "[DVE - TopLevel.2 - ···", logo: "dve", dim: true },
  { title: "[DVE - parintoser.vd···", logo: "dve", dim: true },
  { title: "wyf@bogon:~/verilo···", logo: "term" },
  { title: "[parintoser.v (~/veril···", logo: "vim", dim: true },
  { title: "[parintosertb.v (~/ve···", logo: "vim", dim: true },
  { title: "[DVE - TopLevel.1 - ···", logo: "dve", dim: true },
  { title: "DVE - TopLevel.2 - [···", logo: "dve", active: true },
];

function Taskbar() {
  return (
    <div className={clsx("relative flex h-[37px] shrink-0 items-center gap-1 bg-[#e8e8e8] pl-[5px]", SANS)}>
      <button aria-label="显示桌面" className="mr-px flex h-[27px] w-[30px] shrink-0 items-center justify-center rounded-xs border border-[#c0c0c0] bg-[#ededed]">
        <Svg>
          <path d="M9 3h5v5H9z" stroke="#2e3436" strokeWidth="2" />
          <path d="M5 8H2v6h3M7 14h2v-3" stroke="#2e3436" strokeWidth="2" />
        </Svg>
      </button>
      {tasks.map((t, i) => (
        <button key={i} className={clsx("flex h-[31px] w-[175px] shrink-0 items-center gap-1 overflow-hidden rounded-xs border pl-[6px] text-[13px] whitespace-nowrap",
          t.active ? "border-[#b4b4b4] bg-[#c8c8c8] text-[#2e3436]" : "border-[#bcbcbc] bg-[#eeeeee]",
          t.dim ? "text-[#8b8e8f]" : "text-[#2e3436]")}>
          {t.logo === "dve" && <DveLogo dim={t.dim} />}
          {t.logo === "term" && <TerminalLogo />}
          {t.logo === "vim" && <VimLogo />}
          <span>{t.title}</span>
        </button>
      ))}
      <div className="ml-[9px] flex shrink-0 gap-[3px]">
        <button aria-label="工作区 1" className="h-[26px] w-[53px] border-2 border-[#8a8a8a] bg-[#f4f4f2]" />
        {[2, 3, 4].map((n) => (
          <button key={n} aria-label={`工作区 ${n}`} className="h-[26px] w-[54px] rounded-xs border border-[#d0d0d0] bg-[#e4e4e4]" />
        ))}
      </div>
      <span className="pointer-events-none absolute right-[14px] text-xl whitespace-nowrap text-[#c4c4c4] [text-shadow:1px_1px_0_#777]">CSDN @你能给我个棒棒糖吗</span>
    </div>
  );
}

export default function App() {
  const [selected, setSelected] = useState("clk");
  return (
    <div className="flex h-screen flex-col overflow-hidden">
      <TopBar />
      <TitleBar />
      <div className={clsx("flex min-h-0 flex-1 flex-col bg-[#c0c0c0] text-black", SERIF)}>
        <MenuBar />
        <Toolbar />
        <div className="h-[5px] shrink-0 bg-[#000080]" />
        <main className="flex min-h-0 flex-1">
          <SignalPanel selected={selected} onSelect={setSelected} />
          <WavePanel selected={selected} />
        </main>
        <div className="flex h-[27px] shrink-0 border-t border-[#808080] pl-px">
          <div className={clsx("flex h-[25px] w-[88px] items-center rounded-b-xs border-t-0 pl-1", RAISED)}>
            <WaveIcon />
            <button className="ml-[5px]">Wave.1</button>
            <button aria-label="Close tab" className="ml-[4px]">
              <Svg w={9} h={9} crisp={false}><path d="M1 1l7 7M8 1L1 8" stroke="#555" strokeWidth="1.500" /></Svg>
            </button>
          </div>
        </div>
        <StatusBar />
      </div>
      <Taskbar />
    </div>
  );
}
